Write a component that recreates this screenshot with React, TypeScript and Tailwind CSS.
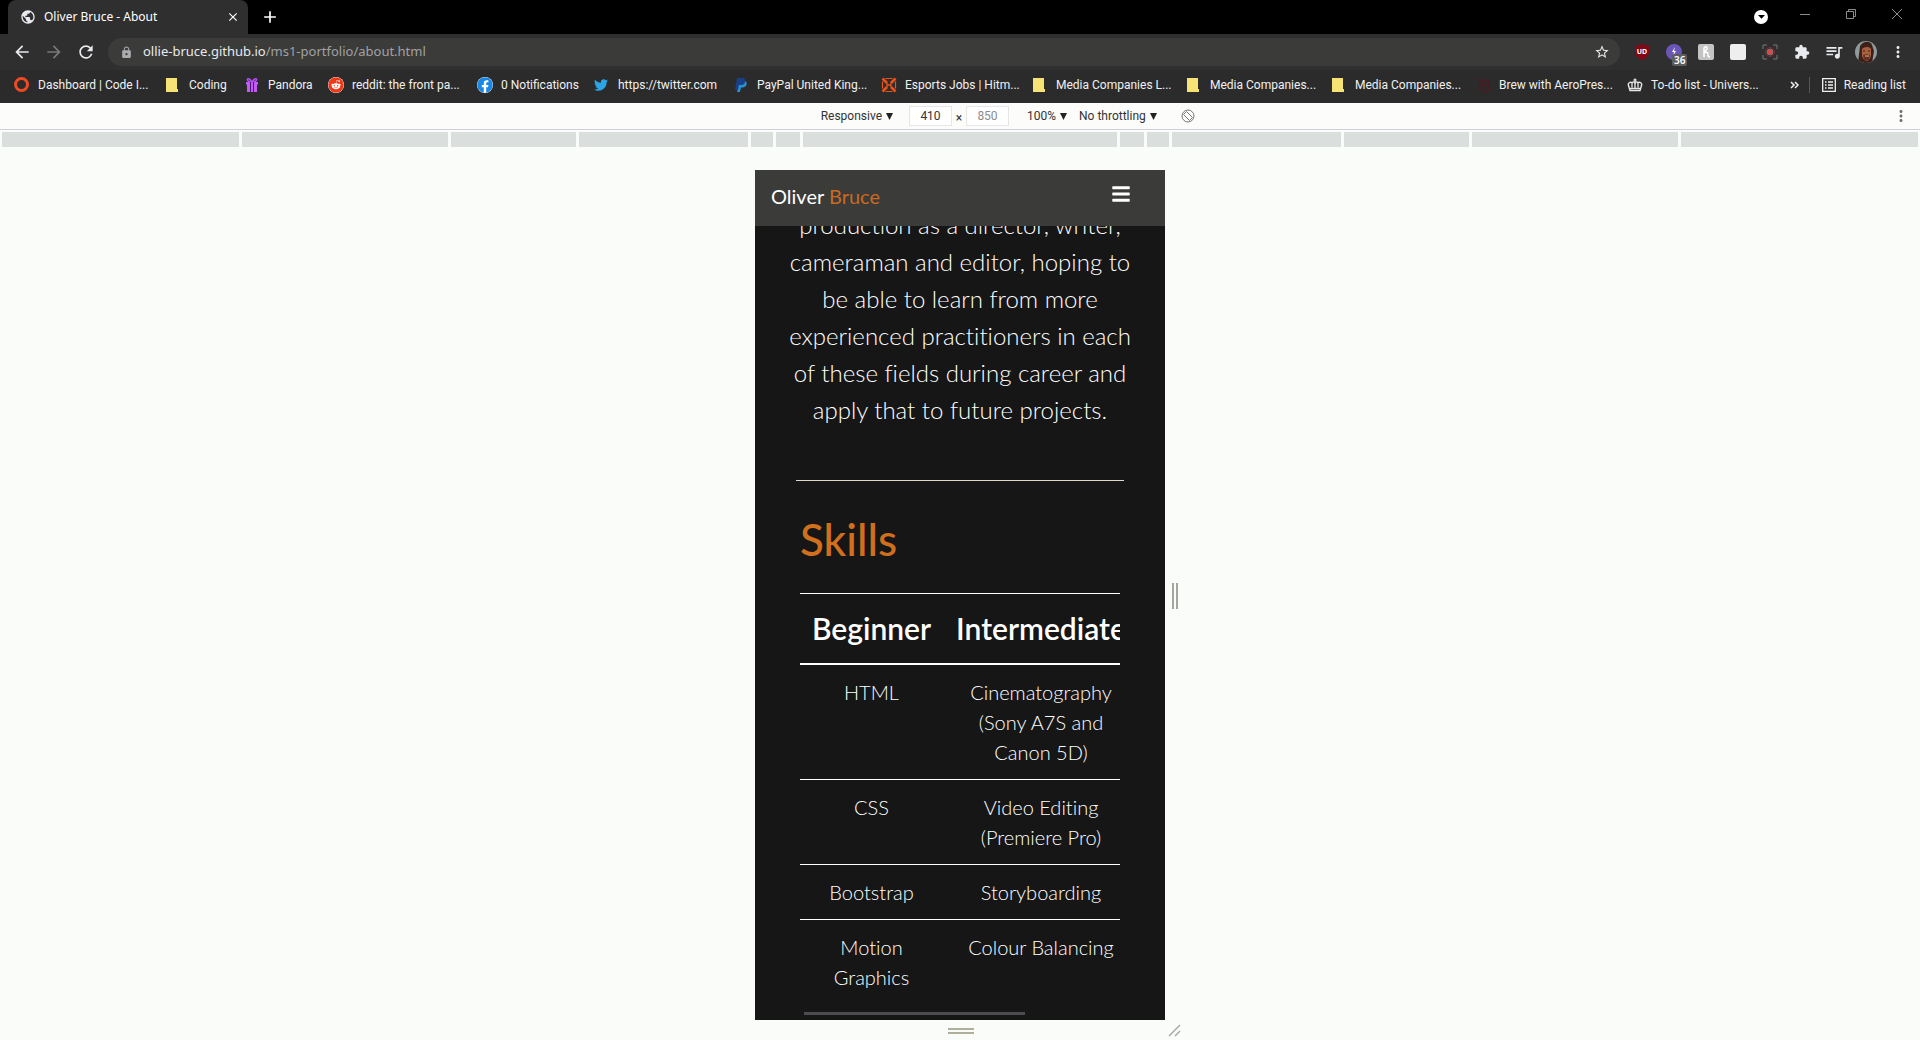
import React from "react";
import { FaReddit, FaTwitter, FaBars, FaFacebook } from "react-icons/fa";
import { MdArrowBack, MdArrowForward, MdRefresh, MdClose, MdAdd, MdStarBorder, MdMoreVert, MdQueueMusic, MdExtension, MdPublic, MdLock } from "react-icons/md";

function Folder() {
  return (
    <svg viewBox="0 0 14 16" className="h-4 w-[14px]">
      <path d="M1 1h11v11h1v3H1z" fill="#f7e275" />
    </svg>
  );
}
function Gift() {
  return (
    <svg viewBox="0 0 16 16" className="size-4">
      <path d="M2 5h12v2.500h-1V15H3V7.500H2z" fill="#c45bf5" />
      <path d="M8 5C6 1 3 1 3.500 3S6 5 8 5c2 0 4 0 4.500-2S10 1 8 5z" fill="none" stroke="#b44df0" strokeWidth="1.5" />
      <path d="M6.500 5v10M9.500 5v10" stroke="#4a1770" strokeWidth="1" />
    </svg>
  );
}
function Esports() {
  return (
    <svg viewBox="0 0 16 16" className="size-4" stroke="#e9541a" fill="none">
      <path d="M1.500 1.500L6 6M14.500 1.500L10 6M1.500 14.500L6 10M14.500 14.500L10 10" strokeWidth="2.600" />
      <path d="M4.500 1.500h7M4.500 14.500h7M1.500 4.500v7M14.500 4.500v7" strokeWidth="1.200" />
      <path d="M6 5.500v5M10 5.500v5M6 8h4" strokeWidth="1.300" />
    </svg>
  );
}
function Crown() {
  return (
    <svg viewBox="0 0 16 14" className="h-[14px] w-4">
      <path d="M3 12.500L1.500 7.500C.5 5 3.500 3.500 5 5c1-1.500 2-1.500 3 0 1-1.500 2-1.500 3 0 1.500-1.500 4.500 0 3.500 2.500L13 12.500z" fill="none" stroke="#e8e8e8" strokeWidth="1.400" />
      <path d="M8 .5v4M6.500 2h3M3 10.500h10M5 5.500v4M8 5v5M11 5.500v4" stroke="#e8e8e8" strokeWidth="1.300" />
    </svg>
  );
}
function Paypal() {
  return (
    <svg viewBox="0 0 16 16" className="size-4">
      <path d="M6 4h6c3 1 2 6-2 6.500H8L7 15H4z" fill="#2b90cf" />
      <path d="M4 1h6c4 1 2.500 7-1.500 7H6l-1 5H2z" fill="#1a3f86" />
    </svg>
  );
}
function Brew() {
  return (
    <svg viewBox="0 0 16 18" className="h-[18px] w-4" fill="none" stroke="#4d1a22" strokeWidth="1.500">
      <path d="M1 2l4 3v6c1 6 8 6 9 1V6c-2-3-6-2-6 1s4 4 4 1" />
    </svg>
  );
}

const bookmarks: { label: string; icon: React.ReactNode; w: string }[] = [
  { label: "Dashboard | Code I...", icon: <span className="size-[15px] rounded-full border-[3px] border-[#ee4b25]" />, w: "w-[151px]" },
  { label: "Coding", icon: <Folder />, w: "w-[79px]" },
  { label: "Pandora", icon: <Gift />, w: "w-[84px]" },
  { label: "reddit: the front pa...", icon: <FaReddit className="size-4 rounded-full bg-white text-[#f03a17]" />, w: "w-[149px]" },
  { label: "0 Notifications", icon: <FaFacebook className="size-4 rounded-full bg-white text-[#1787e8]" />, w: "w-[117px]" },
  { label: "https://twitter.com", icon: <FaTwitter className="size-[14px] text-[#2ba5e8]" />, w: "w-[139px]" },
  { label: "PayPal United King...", icon: <Paypal />, w: "w-[148px]" },
  { label: "Esports Jobs | Hitm...", icon: <Esports />, w: "w-[151px]" },
  { label: "Media Companies L...", icon: <Folder />, w: "w-[154px]" },
  { label: "Media Companies...", icon: <Folder />, w: "w-[145px]" },
  { label: "Media Companies...", icon: <Folder />, w: "w-[144px]" },
  { label: "Brew with AeroPres...", icon: <Brew />, w: "w-[152px]" },
  { label: "To-do list - Univers...", icon: <Crown />, w: "w-[148px]" },
];

function TitleBar() {
  return (
    <header className="flex h-[34px] items-end bg-black pl-2 text-white">
      <div className="flex h-[34px] w-[240px] items-center rounded-t-lg bg-[#2f2f30] pr-2 pl-3">
        <MdPublic className="size-4 text-[#e8eaed]" />
        <span className="ml-2 flex-1 text-xs">Oliver Bruce - About</span>
        <button aria-label="Close tab"><MdClose className="size-[14px]" /></button>
      </div>
      <button aria-label="New tab" className="ml-3 flex h-[34px] items-center"><MdAdd className="size-5" /></button>
      <div className="ml-auto flex h-[34px] items-center">
        <button aria-label="Tab search" className="mr-8 flex size-[14px] items-center justify-center rounded-full bg-white">
          <svg viewBox="0 0 8 6" className="w-[7px]"><path d="M0 1h8L4 5.500z" /></svg>
        </button>
        <div className="flex items-center gap-9 pr-[18px] pb-1.5 text-[#8c8c8c]">
          <button aria-label="Minimise"><svg viewBox="0 0 10 10" className="size-[10px]" stroke="currentColor"><path d="M0 5.500h10" /></svg></button>
          <button aria-label="Restore"><svg viewBox="0 0 10 10" className="size-[10px]" fill="none" stroke="currentColor"><path d="M.5 2.500h7v7h-7zM2.500 2.500v-2h7v7h-2" /></svg></button>
          <button aria-label="Close"><svg viewBox="0 0 10 10" className="size-[10px]" stroke="currentColor"><path d="M0 0l10 10M10 0L0 10" /></svg></button>
        </div>
      </div>
    </header>
  );
}

function Tool({ label, children }: { label: string; children: React.ReactNode }) {
  return <button aria-label={label} className="flex size-8 items-center justify-center">{children}</button>;
}

function Toolbar() {
  return (
    <div className="flex h-9 items-center bg-[#2f2f30] pr-1.5 pl-3 text-[#e8eaed]">
      <button aria-label="Back"><MdArrowBack className="size-5" /></button>
      <button aria-label="Forward" className="ml-3 text-[#77787a]"><MdArrowForward className="size-5" /></button>
      <button aria-label="Reload" className="ml-3"><MdRefresh className="size-5" /></button>
      <div className="ml-3 flex h-7 flex-1 items-center rounded-full bg-[#3b3b39] pr-2.5 pl-3">
        <MdLock className="size-[13px] text-[#a9abae]" />
        <a href="#address" className="ml-2.5 flex-1 text-[13px]">ollie-bruce.github.io<span className="text-[#a0a2a5]">/ms1-portfolio/about.html</span></a>
        <button aria-label="Bookmark this page"><MdStarBorder className="size-4" /></button>
      </div>
      <div className="ml-1.5 flex items-center">
        <Tool label="uBlock">
          <svg viewBox="0 0 16 16" className="size-4"><path d="M8 0l7 2v6c0 4-4 7-7 8-3-1-7-4-7-8V2z" fill="#800818" /><text x="8" y="10" textAnchor="middle" fontSize="7" fontWeight="700" fill="#fff" fontFamily="Noto Sans">UD</text></svg>
        </Tool>
        <Tool label="Tracker blocker">
          <span className="relative size-4 rounded-full bg-[#6b55b8]">
            <svg viewBox="0 0 16 16" className="size-4"><path d="M9 3L6 8h2l-1 4 3-5H8z" fill="#fff" /></svg>
            <span className="absolute top-2.5 left-1.5 rounded-xs bg-[#5d5d5f] px-0.5 text-[10px] leading-3 font-semibold text-white">36</span>
          </span>
        </Tool>
        <Tool label="Honey">
          <svg viewBox="0 0 16 16" className="size-4" fill="none" stroke="#fff" strokeWidth="1.500"><rect width="16" height="16" rx="2" fill="#c4c4c4" stroke="none" /><path d="M6 13V5c0-3 4-3 3 0L6 9c4-2 4 0 4 2s1 2 2 2" /></svg>
        </Tool>
        <Tool label="Extension"><span className="size-4 rounded-xs bg-[#eeeeee]" /></Tool>
        <Tool label="Screen recorder">
          <svg viewBox="0 0 16 16" className="size-4" fill="none" stroke="#77787a"><path d="M1 5V1h4M11 1h4v4M15 11v4h-4M5 15H1v-4" /><circle cx="8" cy="8" r="3" fill="#e04545" /><circle cx="8" cy="8" r="4.500" stroke="#7d2c2c" /></svg>
        </Tool>
        <Tool label="Extensions"><MdExtension className="size-4" /></Tool>
        <Tool label="Media controls"><MdQueueMusic className="size-5" /></Tool>
        <Tool label="Profile">
          <svg viewBox="0 0 22 22" className="size-[22px] rounded-full"><rect width="22" height="22" fill="#8f9a9f" /><path d="M3 22L5 5c3-5 10-6 12-1l2 6-2 12z" fill="#3c2119" /><path d="M7 8c2-2 7-3 9 0v6c-1 7-7 8-9 1z" fill="#a9603f" /><path d="M8 10h2M13 10h2" stroke="#3c2119" /><path d="M8 14c2-1 5-1 7 0l-1 5H9z" fill="#6b2f1d" /><path d="M10 15h4" stroke="#d8b8a8" /></svg>
        </Tool>
        <Tool label="Menu"><MdMoreVert className="size-[18px]" /></Tool>
      </div>
    </div>
  );
}

function BookmarksBar() {
  return (
    <nav className="flex h-[33px] items-center overflow-hidden bg-[#2b2b2c] pb-1 pl-[14px] font-[Roboto,sans-serif] text-xs whitespace-nowrap text-[#f1f1f1]">
      {bookmarks.map((b, i) => (
        <a href="#bookmark" key={i} className={`flex shrink-0 items-center ${b.w}`}>
          <span className="flex w-[18px] shrink-0 items-center">{b.icon}</span>
          <span className="ml-1.5">{b.label}</span>
        </a>
      ))}
      <div className="ml-auto flex items-center pr-[14px]">
        <button aria-label="More bookmarks">
          <svg viewBox="0 0 9 8" className="h-2 w-[9px]" fill="none" stroke="currentColor" strokeWidth="1.500"><path d="M1 1l3 3-3 3M5 1l3 3-3 3" /></svg>
        </button>
        <span className="mr-3 ml-2.5 h-4 w-px bg-[#56575a]" />
        <button className="flex items-center gap-2">
          <svg viewBox="0 0 14 14" className="size-[14px]" fill="none" stroke="currentColor" strokeWidth="1.300"><path d="M.7.7h12.600v12.600H.7zM3 4h1.500M3 7h1.500M3 10h1.500M6 4h5M6 7h5M6 10h5" /></svg>
          Reading list
        </button>
      </div>
    </nav>
  );
}

const arrow = <svg viewBox="0 0 8 8" className="ml-1 size-[7px]"><path d="M0 0h8L4 8z" fill="#222" /></svg>;

function DeviceBar() {
  return (
    <div className="flex h-[27px] items-center border-b border-[#cfd0dc] bg-[#fcfcfb] pl-2.5 font-[Roboto,sans-serif] text-xs text-[#333]">
      <div className="flex flex-1 justify-end pr-4"><button className="flex items-center">Responsive{arrow}</button></div>
      <input aria-label="Width" defaultValue="410" className="h-5 w-[43px] border border-[#e6e6e6] bg-white text-center" />
      <span className="w-[14px] pt-1 text-center">×</span>
      <input aria-label="Height" defaultValue="850" className="h-5 w-[43px] border border-[#e6e6e6] bg-white text-center text-[#8c8c8c]" />
      <div className="flex flex-1 items-center pr-2.5 pl-[18px]">
        <button className="flex items-center">100%{arrow}</button>
        <button className="ml-3 flex items-center">No throttling{arrow}</button>
        <button aria-label="Rotate" className="ml-6">
          <svg viewBox="0 0 14 14" className="size-[14px]" fill="none" stroke="#777"><circle cx="7" cy="7" r="6" /><path d="M2.500 5.500l6 6M5.500 2.500l6 6M2.500 5.500l3-3M8.500 11.500l3-3" /></svg>
        </button>
        <button aria-label="More options" className="ml-auto"><MdMoreVert className="size-[18px] text-[#6e6e6e]" /></button>
      </div>
    </div>
  );
}

const rulers = ["w-[237px]", "w-[206px]", "w-[125px]", "w-[169px]", "w-[22px]", "w-[24px]", "flex-1", "w-[24px]", "w-[22px]", "w-[169px]", "w-[125px]", "w-[206px]", "w-[237px]"];

const rows: [string, string][] = [
  ["HTML", "Cinematography (Sony A7S and Canon 5D)"],
  ["CSS", "Video Editing (Premiere Pro)"],
  ["Bootstrap", "Storyboarding"],
  ["Motion Graphics", "Colour Balancing"],
];

function Phone() {
  return (
    <main className="h-[850px] w-[410px] overflow-hidden bg-[#161616] font-[Lato,sans-serif] text-white [font-variant-ligatures:none]">
      <div className="flex h-14 items-center justify-between bg-[#3b3b39] pr-[34px] pb-1 pl-4">
        <a href="#home" className="font-[Exo_2,Exo,Open_Sans,sans-serif] text-xl text-white">Oliver <span className="text-[#c96a20]">Bruce</span></a>
        <button aria-label="Menu" className="pb-1"><FaBars className="size-5 text-white" /></button>
      </div>
      <div className="h-[212px] overflow-hidden">
        <p className="-mt-5 px-6 text-center text-2xl leading-[37px] font-light">production as a director, writer, cameraman and editor, hoping to be able to learn from more experienced practitioners in each of these fields during career and apply that to future projects.</p>
      </div>
      <hr className="mx-[41px] mt-[42px] border-[#ded9c8]" />
      <section className="mx-[45px]">
        <h2 className="mt-8 font-[Exo_2,Exo,Open_Sans,sans-serif] text-[44px] leading-[52px] font-medium text-[#d06f1c]">Skills</h2>
        <div className="mt-7 overflow-hidden">
          <table className="w-[480px] table-fixed border-collapse text-center">
            <thead>
              <tr className="border-t border-b-2 border-white text-[30px] leading-[45px] text-white">
                <th className="w-[143px] px-3 py-3 font-semibold">Beginner</th>
                <th className="w-[196px] px-3 py-3 font-semibold">Intermediate</th>
                <th />
              </tr>
            </thead>
            <tbody className="text-xl leading-[30px] font-light">
              {rows.map(([a, b], i) => (
                <tr key={i} className={i ? "border-t border-white align-top" : "align-top"}>
                  <td className="px-3 py-3">{a}</td>
                  <td className="px-3 py-3">{b}</td>
                  <td />
                </tr>
              ))}
            </tbody>
          </table>
          <div className="mt-2 ml-1 h-[3px] w-[221px] bg-[#4c4c52]" />
        </div>
      </section>
    </main>
  );
}

export default function App() {
  return (
    <div className="flex h-screen flex-col overflow-hidden bg-[#fafcfa] font-[Noto_Sans,sans-serif]">
      <TitleBar />
      <Toolbar />
      <BookmarksBar />
      <DeviceBar />
      <div className="flex h-[17px] shrink-0 gap-[3px] px-0.5 pt-0.5">
        {rulers.map((w, i) => <span key={i} className={`bg-[#dadedc] ${w}`} />)}
      </div>
      <div className="flex justify-center pt-[23px]">
        <div className="relative">
          <Phone />
          <div className="absolute top-[413px] -right-[13px] h-[26px] w-[6px] border-x-2 border-[#a5a5a0]" />
          <div className="absolute -bottom-[14px] left-[193px] h-[6px] w-[26px] border-y-2 border-[#b0b09a]" />
          <svg viewBox="0 0 14 14" className="absolute -right-[17px] -bottom-[17px] size-[14px]" stroke="#aaa" strokeWidth="1.500"><path d="M1 13L12 2M7 13l5-5" /></svg>
        </div>
      </div>
    </div>
  );
}
